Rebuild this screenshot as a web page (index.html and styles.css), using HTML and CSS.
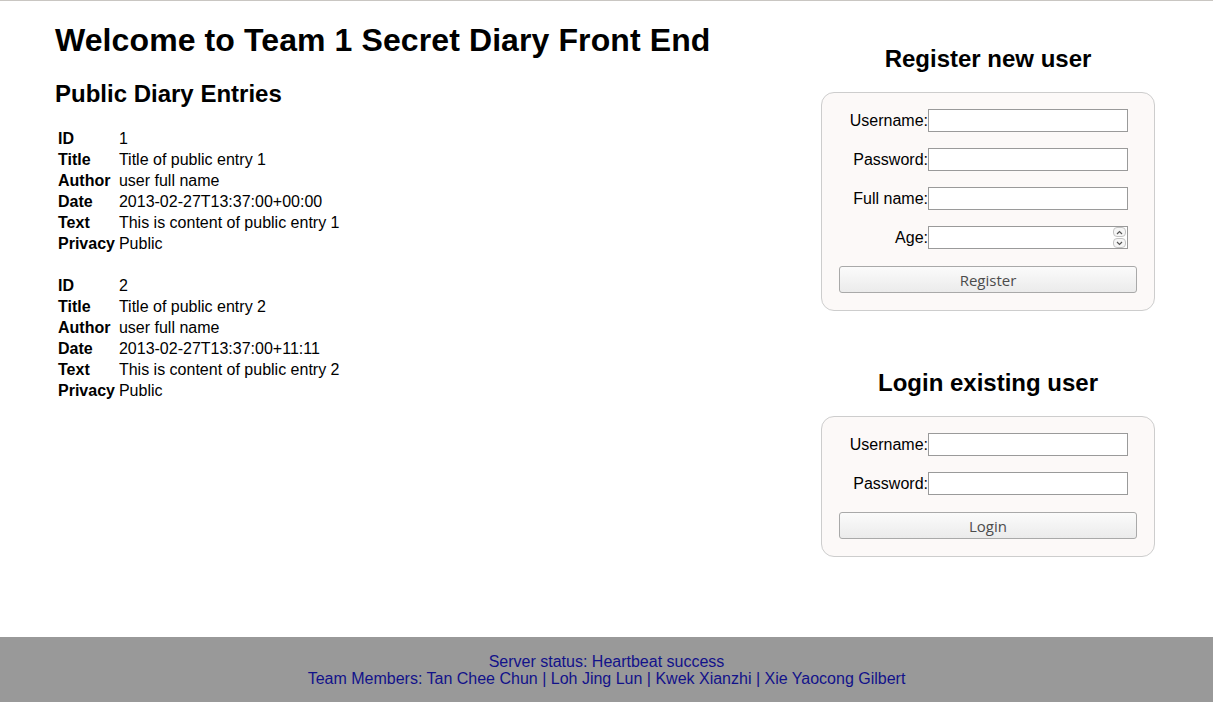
FILE: index.html
```html
<!DOCTYPE html>
<html>
<head>
<meta charset="utf-8">
<title>Team 1 Secret Diary</title>
<link rel="stylesheet" href="styles.css">
</head>
<body>
<div class="page">
  <main class="main">
    <section class="entries">
      <h1 class="title">Welcome to Team 1 Secret Diary Front End</h1>
      <h2 class="subtitle">Public Diary Entries</h2>
      <table class="entry">
        <tr><th>ID</th><td>1</td></tr>
        <tr><th>Title</th><td>Title of public entry 1</td></tr>
        <tr><th>Author</th><td>user full name</td></tr>
        <tr><th>Date</th><td>2013-02-27T13:37:00+00:00</td></tr>
        <tr><th>Text</th><td>This is content of public entry 1</td></tr>
        <tr><th>Privacy</th><td>Public</td></tr>
      </table>
      <table class="entry">
        <tr><th>ID</th><td>2</td></tr>
        <tr><th>Title</th><td>Title of public entry 2</td></tr>
        <tr><th>Author</th><td>user full name</td></tr>
        <tr><th>Date</th><td>2013-02-27T13:37:00+11:11</td></tr>
        <tr><th>Text</th><td>This is content of public entry 2</td></tr>
        <tr><th>Privacy</th><td>Public</td></tr>
      </table>
    </section>
    <aside class="side">
      <h2 class="side-title">Register new user</h2>
      <form class="panel">
        <label class="row"><span class="lbl">Username:</span><input class="field" type="text"></label>
        <label class="row"><span class="lbl">Password:</span><input class="field" type="password"></label>
        <label class="row"><span class="lbl">Full name:</span><input class="field" type="text"></label>
        <label class="row"><span class="lbl">Age:</span>
          <span class="spin-wrap"><input class="field" type="text"><span class="spin"><span class="spin-btn"><svg width="7" height="5" viewBox="0 0 7 5"><path d="M1 4 L3.5 1.5 L6 4" fill="none" stroke="#555" stroke-width="1.2"/></svg></span><span class="spin-btn"><svg width="7" height="5" viewBox="0 0 7 5"><path d="M1 1 L3.5 3.5 L6 1" fill="none" stroke="#555" stroke-width="1.2"/></svg></span></span></span>
        </label>
        <button class="btn" type="button">Register</button>
      </form>
      <h2 class="side-title login-title">Login existing user</h2>
      <form class="panel">
        <label class="row"><span class="lbl">Username:</span><input class="field" type="text"></label>
        <label class="row"><span class="lbl">Password:</span><input class="field" type="password"></label>
        <button class="btn" type="button">Login</button>
      </form>
    </aside>
  </main>
  <footer class="footer">
    <div>Server status: Heartbeat success</div>
    <div>Team Members: Tan Chee Chun | Loh Jing Lun | Kwek Xianzhi | Xie Yaocong Gilbert</div>
  </footer>
</div>
</body>
</html>
```

FILE: styles.css
```css
* { box-sizing: border-box; }
html, body { margin: 0; padding: 0; }
body {
  font-family: "Liberation Sans", Arial, sans-serif;
  font-size: 16px;
  color: #000;
  background: #fff;
}
.page {
  min-height: 100vh;
  display: flex;
  flex-direction: column;
  border-top: 1px solid #c9c6c2;
}
.main {
  display: flex;
  justify-content: space-between;
  align-items: flex-start;
  padding: 0 58px 0 55px;
}
.title {
  font-size: 32px;
  font-weight: bold;
  letter-spacing: 0.1px;
  margin: 21px 0 21px;
}
.subtitle {
  font-size: 24px;
  font-weight: bold;
  margin: 0 0 19px;
}
.entry {
  border-collapse: separate;
  border-spacing: 2px;
  margin: 0 0 19px;
}
.entry th, .entry td {
  padding: 0 1px;
  line-height: 19px;
  text-align: left;
  vertical-align: top;
}
.entry th { font-weight: bold; }
.side {
  width: 334px;
  display: flex;
  flex-direction: column;
}
.side-title {
  font-size: 24px;
  font-weight: bold;
  text-align: center;
  margin: 44px 0 19px;
}
.login-title { margin-top: 58px; }
.panel {
  border: 1px solid #cdcdcd;
  border-radius: 13px;
  background: #fcf9f8;
  padding: 16px 17px 17px;
  display: flex;
  flex-direction: column;
  gap: 16px;
}
.row {
  display: flex;
  align-items: center;
}
.lbl {
  width: 89px;
  text-align: right;
}
.field {
  width: 200px;
  height: 23px;
  border: 1px solid #9a9a9a;
  background: #fff;
  margin: 0;
  padding: 1px 3px;
  font: inherit;
}
.spin-wrap {
  position: relative;
  display: flex;
}
.spin {
  position: absolute;
  right: 2px;
  top: 1px;
  display: flex;
  flex-direction: column;
  gap: 1px;
}
.spin-btn {
  width: 13px;
  height: 10px;
  border: 1px solid #c4c4c4;
  border-radius: 4px;
  background: #f6f6f6;
  display: flex;
  align-items: center;
  justify-content: center;
}
.spin-btn svg { display: block; }
.btn {
  margin-top: 1px;
  width: 100%;
  height: 27px;
  border: 1px solid #a9a9a9;
  border-radius: 3px;
  background: linear-gradient(#fbfbfb, #ebebeb);
  font-family: "Open Sans", "DejaVu Sans", sans-serif;
  font-size: 15px;
  color: #4c4c4c;
  padding: 0;
}
.footer {
  margin-top: auto;
  background: #999;
  color: #12128a;
  text-align: center;
  line-height: 17px;
  padding: 16px 0 15px;
}
```
